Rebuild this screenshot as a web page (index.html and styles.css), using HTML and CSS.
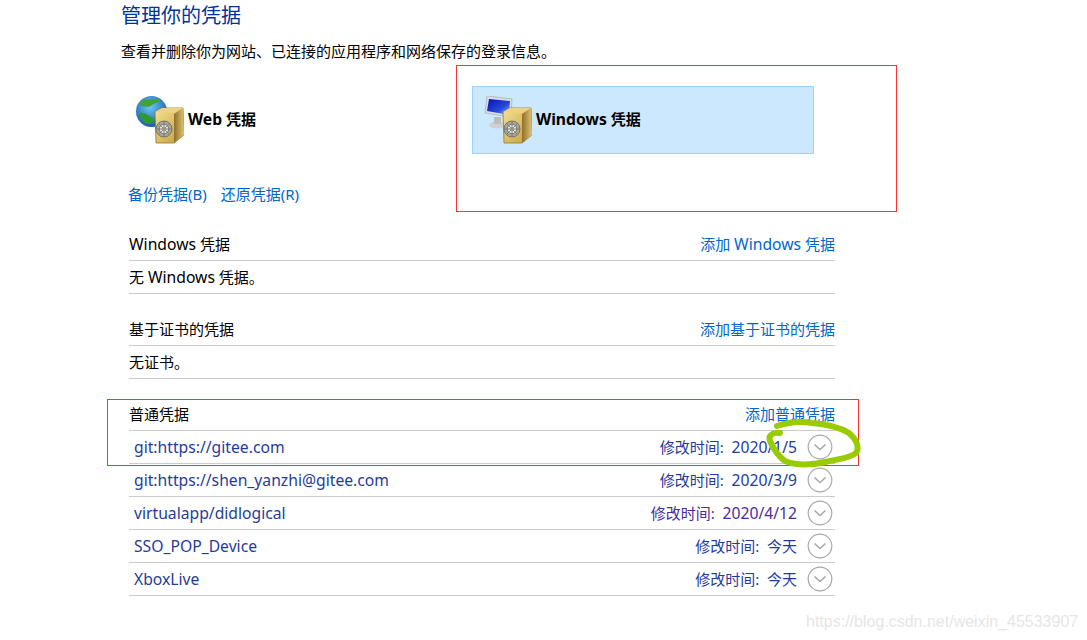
FILE: index.html
```html
<!DOCTYPE html>
<html lang="zh-CN">
<head>
    <meta charset="UTF-8">
    <title>凭据管理器</title>
    <link rel="stylesheet" href="styles.css">
</head>
<body>
    <svg class="defs" width="0" height="0">
        <defs>
            <linearGradient id="safeFront" x1="0" y1="0" x2="1" y2="1">
                <stop offset="0" stop-color="#f6e294"/>
                <stop offset="1" stop-color="#c49c38"/>
            </linearGradient>
            <linearGradient id="safeSide" x1="0" y1="0" x2="1" y2="0">
                <stop offset="0" stop-color="#8f6f2a"/>
                <stop offset="1" stop-color="#e0c470"/>
            </linearGradient>
            <radialGradient id="globeFill" cx="0.45" cy="0.35" r="0.75">
                <stop offset="0" stop-color="#6cc8f4"/>
                <stop offset="1" stop-color="#0e4a98"/>
            </radialGradient>
            <linearGradient id="screenFill" x1="0" y1="0" x2="1" y2="1">
                <stop offset="0" stop-color="#0a10b0"/>
                <stop offset="0.6" stop-color="#2448dc"/>
                <stop offset="1" stop-color="#9cb4f0"/>
            </linearGradient>
            <symbol id="safe" viewBox="0 0 48 48">
                <path d="M19 16 L26 12 L47 12 L48 39 L38 47 L20 47 Z" fill="url(#safeFront)" stroke="#94762f" stroke-width="0.8"/>
                <path d="M38 18 L47 12 L48 39 L38 47 Z" fill="url(#safeSide)"/>
                <path d="M19 16 L26 12 L47 12 L38 17 Z" fill="#ecd284"/>
                <circle cx="28" cy="33" r="8" fill="#a9a79a" stroke="#77756a" stroke-width="1"/>
                <circle cx="28" cy="33" r="4.800" fill="#e2e2da" stroke="#77756a" stroke-width="1"/>
                <path d="M28 25 V41 M20 33 H36 M22.500 27.500 L33.500 38.500 M33.500 27.500 L22.500 38.500" stroke="#77756a" stroke-width="0.8"/>
                <circle cx="28" cy="33" r="2" fill="#96948a"/>
            </symbol>
        </defs>
    </svg>

    <div class="page">
        <h1 class="title">管理你的凭据</h1>
        <p class="intro">查看并删除你为网站、已连接的应用程序和网络保存的登录信息。</p>

        <div class="tiles">
            <div class="tile">
                <svg class="tile-icon" width="48" height="48" viewBox="0 0 48 48">
                    <circle cx="15.500" cy="15.500" r="15.500" fill="url(#globeFill)"/>
                    <path d="M8 3 C12 5 18 2 24 3 C23 7 17 7 15 10 C11 12 6 10 3 8 Z" fill="#3fa23a"/>
                    <path d="M3 17 C8 16 14 20 19 24 C16 27 13 29 9 27 C6 24 4 21 3 17 Z" fill="#2f9a34"/>
                    <use href="#safe" x="0" y="0" width="48" height="48"/>
                </svg>
                <span class="tile-label"><span class="latin">Web</span> 凭据</span>
            </div>
            <div class="tile tile-active">
                <svg class="tile-icon" width="48" height="48" viewBox="0 0 48 48">
                    <ellipse cx="13" cy="29" rx="8" ry="3.500" fill="#d0d0d0"/>
                    <path d="M10 21 H17 V28 H10 Z" fill="#bdbdbd"/>
                    <path d="M3 0 L28 3 L27 21 L1 17 Z" fill="#dadde2" stroke="#9ea2aa" stroke-width="0.6"/>
                    <path d="M5 3 L26 5 L25 19 L3 15 Z" fill="url(#screenFill)"/>
                    <use href="#safe" x="0" y="0" width="48" height="48"/>
                </svg>
                <span class="tile-label"><span class="latin">Windows</span> 凭据</span>
            </div>
        </div>

        <div class="tools">
            <a class="link">备份凭据(B)</a>
            <a class="link">还原凭据(R)</a>
        </div>

        <section class="group">
            <div class="group-head"><span><span class="latin">Windows</span> 凭据</span><a class="link">添加 <span class="latin">Windows</span> 凭据</a></div>
            <div class="group-empty">无 <span class="latin">Windows</span> 凭据。</div>
        </section>

        <section class="group">
            <div class="group-head"><span>基于证书的凭据</span><a class="link">添加基于证书的凭据</a></div>
            <div class="group-empty">无证书。</div>
        </section>

        <section class="group">
            <div class="group-head"><span>普通凭据</span><a class="link">添加普通凭据</a></div>
            <div class="cred">
                <span class="cred-name">git:https://gitee.com</span>
                <span class="cred-date">修改时间:&nbsp; <span class="latin">2020/1/5</span></span>
                <svg class="chevron" width="26" height="26" viewBox="0 0 26 26"><circle cx="13" cy="13" r="11.800"/><path d="M7.500 10.500 L13 15.500 L18.500 10.500"/></svg>
            </div>
            <div class="cred">
                <span class="cred-name">git:https://shen_yanzhi@gitee.com</span>
                <span class="cred-date">修改时间:&nbsp; <span class="latin">2020/3/9</span></span>
                <svg class="chevron" width="26" height="26" viewBox="0 0 26 26"><circle cx="13" cy="13" r="11.800"/><path d="M7.500 10.500 L13 15.500 L18.500 10.500"/></svg>
            </div>
            <div class="cred">
                <span class="cred-name">virtualapp/didlogical</span>
                <span class="cred-date">修改时间:&nbsp; <span class="latin">2020/4/12</span></span>
                <svg class="chevron" width="26" height="26" viewBox="0 0 26 26"><circle cx="13" cy="13" r="11.800"/><path d="M7.500 10.500 L13 15.500 L18.500 10.500"/></svg>
            </div>
            <div class="cred">
                <span class="cred-name">SSO_POP_Device</span>
                <span class="cred-date">修改时间:&nbsp; 今天</span>
                <svg class="chevron" width="26" height="26" viewBox="0 0 26 26"><circle cx="13" cy="13" r="11.800"/><path d="M7.500 10.500 L13 15.500 L18.500 10.500"/></svg>
            </div>
            <div class="cred">
                <span class="cred-name">XboxLive</span>
                <span class="cred-date">修改时间:&nbsp; 今天</span>
                <svg class="chevron" width="26" height="26" viewBox="0 0 26 26"><circle cx="13" cy="13" r="11.800"/><path d="M7.500 10.500 L13 15.500 L18.500 10.500"/></svg>
            </div>
        </section>
    </div>

    <!-- annotations drawn on top of the screenshot -->
    <div class="mark mark-tile"></div>
    <div class="mark mark-row"></div>
    <svg class="scribble" width="1087" height="640" viewBox="0 0 1087 640">
        <path d="M780 433 C772 432 768 436 770 441 C774 450 778 456 785 461 C797 466 812 465 826 462 C836 459 849 459 856 453 C860 447 856 439 849 433 C839 427 826 424 812 423 C800 421 786 423 777 426"/>
    </svg>
    <div class="watermark">https://blog.csdn.net/weixin_45533907</div>
</body>
</html>
```

FILE: styles.css
```css
*{margin:0;padding:0;box-sizing:border-box;}
html,body{width:100%;height:100%;overflow:hidden;background:#fff;}
body{font-family:"Noto Sans","Noto Sans CJK SC",sans-serif;font-size:15px;line-height:20px;color:#1a1a1a;text-spacing-trim:space-all;}
.defs{display:block;height:0;}
.latin{font-size:15.7px;line-height:1;}

.page{width:714px;margin-left:121px;}
.title{height:30px;line-height:32px;font-size:20px;font-weight:400;color:#003399;}
.intro{margin-top:11px;height:20px;color:#000;white-space:nowrap;}

.tiles{display:flex;gap:6px;margin-top:25px;margin-left:3px;}
.tile{display:flex;align-items:center;width:342px;height:68px;padding-left:11px;border:1px solid transparent;}
.tile-active{background:#cce8ff;border-color:#99d1ff;}
.tile-icon{flex:none;}
.tile-label{margin-left:4px;margin-bottom:2px;font-weight:700;color:#000;}

.tools{display:flex;gap:14px;margin-top:30px;margin-left:7px;height:20px;}
.link{color:#0066cc;white-space:nowrap;}

.group{margin-top:19px;margin-left:8px;width:706px;}
.tools + .group{margin-top:24px;}
.group-head{display:flex;justify-content:space-between;align-items:center;height:33px;border-bottom:1px solid #ccc;color:#000;}
.group-empty{height:33px;line-height:32px;border-bottom:1px solid #ccc;color:#000;}

.cred{display:flex;align-items:center;height:33px;padding-left:5px;border-bottom:1px solid #ccc;}
.cred-name{flex:1;color:#1f3c9c;font-size:15.7px;}
.cred-date{color:#1f3c9c;margin-right:10px;margin-bottom:1px;}
.chevron{flex:none;margin-right:2px;}
.chevron circle{fill:#fff;stroke:#a8a8a8;stroke-width:1.200;}
.chevron path{fill:none;stroke:#a8a8a8;stroke-width:1.600;}
.cred:nth-of-type(4) .cred-date{color:#4a2c9c;}

.mark{position:absolute;border:1px solid #f33;}
.mark-tile{left:456px;top:65px;width:441px;height:147px;}
.mark-row{left:107px;top:399px;width:752px;height:67px;}
.scribble{position:absolute;left:0;top:0;pointer-events:none;}
.scribble path{fill:none;stroke:#99cc00;stroke-width:6;stroke-linecap:round;stroke-linejoin:round;}
.watermark{position:absolute;left:806px;top:612px;font-family:"Liberation Sans",sans-serif;font-size:16px;line-height:20px;color:#e6e6e6;white-space:nowrap;}
```
